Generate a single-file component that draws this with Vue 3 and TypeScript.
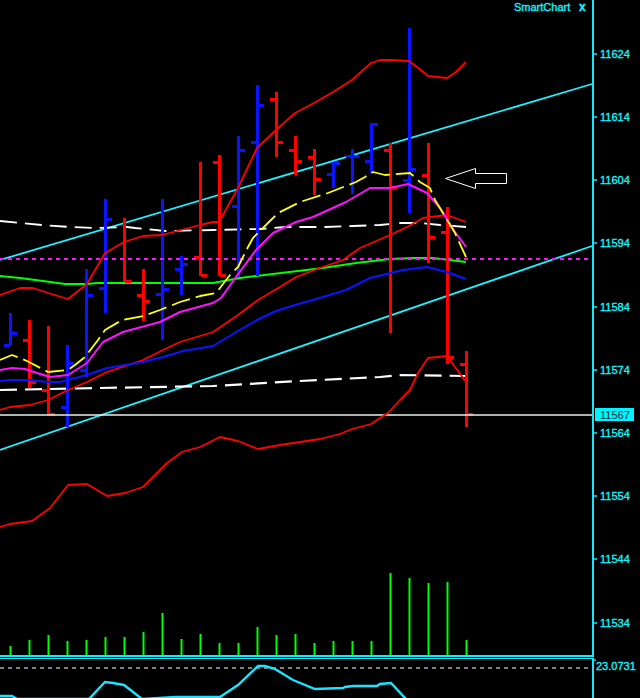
<script setup lang="ts">
type Pt = [number, number]
type Bar = { x: number; hi: number; lo: number; open: number | null; close: number; up: boolean }

const toPoints = (pts: Pt[]) => pts.map(([x, y]) => `${x},${y}`).join(' ')

const rawBars: [number, number, number | null, number, boolean][] = [
  [313, 346, 345, 333, true], [320, 388, 340, 382, false], [326, 415, 390, 414, false],
  [345, 427, 407, 363, true], [269, 377, 370, 295, true], [199, 313, 288, 219, true],
  [218, 282, null, 281, false], [269, 321, 295, 301, false], [199, 340, 294, 289, true],
  [256, 295, 269, 264, true], [162, 276, 257, 275, false], [155, 276, 162, 275, false],
  [136, 277, 206, 150, true], [85, 276, 142, 105, true], [92, 157, 99, 142, false],
  [136, 175, 150, 161, false], [149, 195, 157, 179, false], [162, 188, 174, 163, true],
  [149, 194, 156, 156, true], [123, 173, 161, 124, true], [143, 333, 150, 187, false],
  [28, 213, 180, 169, true], [143, 263, 175, 237, false], [207, 364, 232, 357, false],
  [351, 427, 364, 414, false]
]
const bars: Bar[] = rawBars.map(([hi, lo, open, close, up], i) => ({
  x: 10.5 + 19 * i, hi, lo, open, close, up
}))

const volumeTops = [646, 640, 635, 641, 640, 637, 637, 632, 613, 639, 634, 643, 643, 627, 635, 634, 643, 641, 641, 641, 573, 578, 583, 582, 640]
const volumes = volumeTops.map((top, i) => ({ x: 10.5 + 19 * i, top }))

const upperBand = toPoints([[0,295],[20,288],[33,288],[48,293],[68,299],[87,284],[105,253],[124,242],[143,236],[162,235],[181,230],[200,225],[213,222],[219,222],[238,188],[257,148],[276,130],[295,113],[314,103],[333,92],[352,80],[371,63],[380,60],[390,60],[409,61],[417,67],[428,76],[447,78],[456,72],[466,62]])
const midRed = toPoints([[0,410],[10,407],[30,405],[48,400],[68,390],[87,382],[107,372],[143,360],[163,350],[180,342],[213,332],[238,315],[258,300],[280,287],[296,277],[320,268],[343,260],[360,248],[390,235],[407,227],[423,218],[447,215],[466,222]])
const lowerBand = toPoints([[0,527],[10,524],[32,521],[50,508],[68,485],[87,484],[107,496],[125,493],[143,487],[153,477],[167,463],[182,452],[200,447],[220,437],[238,441],[258,449],[280,445],[300,442],[320,439],[340,434],[352,429],[371,424],[380,418],[388,413],[400,400],[410,390],[418,373],[428,358],[447,356],[466,382]])
const blueMa = toPoints([[0,381],[10,380],[30,380],[48,382],[60,382],[87,375],[107,368],[143,362],[163,357],[183,351],[213,346],[238,331],[257,320],[276,311],[295,305],[313,300],[346,290],[370,278],[403,270],[427,267],[447,272],[466,279]])
const magentaMa = toPoints([[0,370],[12,368],[25,369],[37,373],[50,377],[68,375],[87,363],[103,342],[123,332],[160,322],[180,312],[213,303],[221,298],[236,277],[256,250],[273,233],[296,222],[313,217],[346,202],[370,188],[390,188],[408,184],[427,193],[440,208],[455,232],[466,247]])
const yellowMa = toPoints([[0,360],[12,355],[20,358],[27,361],[48,372],[68,370],[75,365],[85,357],[98,340],[105,330],[122,320],[143,316],[160,310],[180,302],[200,296],[216,293],[230,275],[238,267],[248,247],[253,238],[271,220],[278,213],[300,202],[328,193],[356,182],[365,177],[373,172],[385,175],[410,173],[420,182],[430,188],[435,200],[443,213],[455,233],[466,257]])
const greenMa = toPoints([[0,276],[20,278],[43,281],[65,284],[87,284],[97,283],[213,283],[240,278],[323,268],[356,263],[390,259],[413,258],[433,258],[466,262]])
const whiteUpper = toPoints([[0,221],[20,223],[42,225],[70,227],[97,228],[127,227],[135,228],[165,231],[213,230],[260,229],[285,227],[325,227],[353,226],[380,225],[400,223],[420,223],[440,225],[466,227]])
const whiteLower = toPoints([[0,390],[100,388],[213,386],[300,381],[380,377],[400,375],[466,376]])
const oscillator = toPoints([[0,696],[12,696],[17,699],[89,699],[105,682],[113,683],[124,685],[142,699],[176,697],[220,697],[238,685],[258,666],[265,666],[275,669],[293,680],[315,689],[343,688],[345,687],[353,686],[377,686],[380,684],[391,683],[406,699]])

const arrow = toPoints([[445.5,178.5],[475.5,168.5],[475.5,173.5],[506.5,173.5],[506.5,183.5],[475.5,183.5],[475.5,188.5]])

const priceLabels = [
  { text: '11624', y: 54 }, { text: '11614', y: 117 }, { text: '11604', y: 180 },
  { text: '11594', y: 243 }, { text: '11584', y: 307 }, { text: '11574', y: 370 },
  { text: '11564', y: 433 }, { text: '11554', y: 496 }, { text: '11544', y: 559 },
  { text: '11534', y: 623 }
]
</script>

<template>
  <div class="terminal">
    <svg class="chart" viewBox="0 0 640 698" width="640" height="698">
      <line class="channel" x1="0" y1="260" x2="592" y2="84" />
      <line class="channel" x1="0" y1="450" x2="592" y2="246" />

      <polyline class="ma white" :points="whiteUpper" />
      <polyline class="ma white low" :points="whiteLower" />
      <polyline class="ma green" :points="greenMa" />

      <g v-for="(b, i) in bars" :key="i" class="bar" :class="b.up ? 'up' : 'down'">
        <rect :x="b.x - 1.5" :y="b.hi" width="3" :height="b.lo - b.hi" />
        <rect v-if="b.open !== null" :x="b.x - 6.5" :y="b.open - 1" width="6" height="3" />
        <rect :x="b.x + 0.5" :y="b.close - 1" width="6" height="3" />
      </g>

      <line class="pivot" x1="0" y1="259" x2="592" y2="259" />
      <line class="last" x1="0" y1="415" x2="593" y2="415" />

      <polyline class="ma red" :points="upperBand" />
      <polyline class="ma red" :points="midRed" />
      <polyline class="ma red" :points="lowerBand" />
      <polyline class="ma blue" :points="blueMa" />
      <polyline class="ma magenta" :points="magentaMa" />
      <polyline class="ma yellow" :points="yellowMa" />

      <polygon class="arrow" :points="arrow" />

      <line v-for="v in volumes" :key="v.x" class="volume" :x1="v.x" :y1="v.top" :x2="v.x" y2="655" />

      <line class="frame-v" x1="593" y1="0" x2="593" y2="656" />
      <line class="frame-v" x1="593" y1="659" x2="593" y2="698" />
      <line class="frame-h thick" x1="0" y1="656" x2="594" y2="656" />
      <line class="frame-h" x1="0" y1="658.5" x2="594" y2="658.5" />

      <g v-for="p in priceLabels" :key="p.text">
        <line class="tick" x1="594" :y1="p.y" x2="597" :y2="p.y" />
        <text class="price" x="600" :y="p.y + 4">{{ p.text }}</text>
      </g>

      <rect class="last-box" x="595" y="408" width="39" height="13" />
      <text class="last-text" x="600" y="419">11567</text>

      <text class="title" x="514" y="11">SmartChart</text>
      <text class="title close" x="579" y="11">x</text>

      <line class="level" x1="0" y1="668" x2="593" y2="668" />
      <line class="tick" x1="594" y1="660" x2="596" y2="660" />
      <text class="price" x="596" y="670">23.0731</text>

      <polyline class="osc" :points="oscillator" />
    </svg>
  </div>
</template>

<style scoped>
.terminal {
  width: 640px;
  height: 698px;
  background: #000;
  overflow: hidden;
}
.chart {
  display: block;
}
.channel {
  stroke: #20f0ff;
  stroke-width: 1.8;
}
.ma {
  fill: none;
  stroke-width: 1.8;
  stroke-linejoin: round;
}
.ma.red { stroke: #ff0000; }
.ma.blue { stroke: #0a14ff; stroke-width: 2; }
.ma.magenta { stroke: #ff10ff; stroke-width: 2; }
.ma.green { stroke: #00ff00; stroke-width: 2; }
.ma.yellow { stroke: #ffff10; stroke-dasharray: 19 6; }
.ma.white { stroke: #ffffff; stroke-width: 1.8; stroke-dasharray: 17 8; }
.ma.white.low { stroke-width: 2.2; }
.bar rect {
  shape-rendering: crispEdges;
}
.bar.up rect { fill: #0a14ff; }
.bar.down rect { fill: #ff0000; }
.pivot {
  stroke: #ff10ff;
  stroke-width: 2;
  stroke-dasharray: 4 4;
}
.last {
  stroke: #e4f2ee;
  stroke-width: 1.4;
}
.arrow {
  fill: #000;
  stroke: #fff;
  stroke-width: 1;
}
.volume {
  stroke: #00ff00;
  stroke-width: 2;
}
.frame-v {
  stroke: #12e8fa;
  stroke-width: 2;
}
.frame-h {
  stroke: #12e8fa;
  stroke-width: 1;
}
.frame-h.thick {
  stroke-width: 2;
}
.tick {
  stroke: #12e8fa;
  stroke-width: 1.5;
}
.price, .title {
  font-family: "Liberation Sans", Arial, sans-serif;
  font-size: 11px;
  fill: #12f4ff;
  stroke: #12f4ff;
  stroke-width: 0.35;
}
.title.close {
  font-weight: bold;
  font-size: 12px;
}
.last-box {
  fill: #00f4ff;
}
.last-text {
  font-family: "Liberation Sans", Arial, sans-serif;
  font-size: 11px;
  fill: #06333a;
}
.level {
  stroke: #a8a8a8;
  stroke-width: 1.5;
  stroke-dasharray: 4 4;
}
.osc {
  fill: none;
  stroke: #1ce4ff;
  stroke-width: 2.4;
}
</style>
